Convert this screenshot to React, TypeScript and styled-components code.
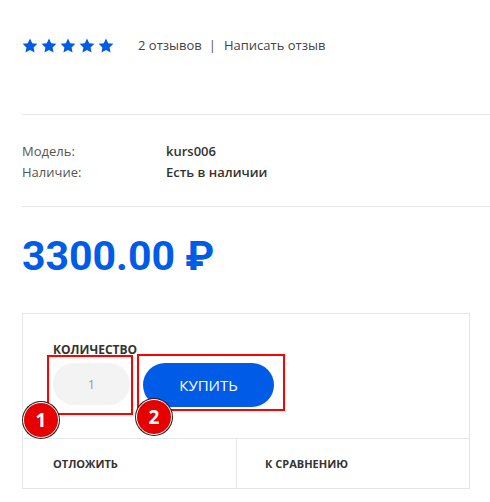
import React from "react";
import styled, { createGlobalStyle } from "styled-components";

const GlobalStyle = createGlobalStyle`
  body {
    margin: 0;
    background: #ffffff;
    font-family: "Open Sans", "Liberation Sans", sans-serif;
    color: #333333;
  }
`;

const BLUE = "#005ce6";

export default function App() {
  return (
    <>
      <GlobalStyle />
      <Page>
        <RatingRow>
          <Stars>
            {[0, 1, 2, 3, 4].map((i) => (
              <Star key={i} />
            ))}
          </Stars>
          <ReviewLink>2 отзывов</ReviewLink>
          <Separator>|</Separator>
          <ReviewLink>Написать отзыв</ReviewLink>
        </RatingRow>
        <Divider />
        <InfoTable>
          <InfoLabel>Модель:</InfoLabel>
          <InfoValue>kurs006</InfoValue>
          <InfoLabel>Наличие:</InfoLabel>
          <InfoValue>Есть в наличии</InfoValue>
        </InfoTable>
        <Divider />
        <Price>3300.00 ₽</Price>
        <BuyBox>
          <BuyTop>
            <FieldLabel>Количество</FieldLabel>
            <Controls>
              <Annotated>
                <QtyInput defaultValue="1" />
                <Marker $top={-8} $right={-3} $bottom={-8} $left={-6} />
                <Badge $top={39} $left={-30}>1</Badge>
              </Annotated>
              <Annotated>
                <BuyButton>Купить</BuyButton>
                <Marker $top={-9} $right={-11} $bottom={-4} $left={-6} />
                <Badge $top={36} $left={-7}>2</Badge>
              </Annotated>
            </Controls>
          </BuyTop>
          <ActionsRow>
            <ActionCell>Отложить</ActionCell>
            <ActionCell>К сравнению</ActionCell>
          </ActionsRow>
        </BuyBox>
      </Page>
    </>
  );
}

function Star() {
  return (
    <svg width="16" height="15" viewBox="0 0 24 23">
      <path
        d="M12 0.8l3.4 7.2 7.9 1-5.8 5.4 1.5 7.8L12 18.4l-7 3.8 1.5-7.8L0.7 9l7.9-1z"
        fill={BLUE}
      />
    </svg>
  );
}

const Page = styled.div`
  width: 490px;
  height: 502px;
  padding-left: 22px;
  box-sizing: border-box;
  overflow: hidden;
`;

const RatingRow = styled.div`
  display: flex;
  align-items: center;
  height: 20px;
  padding-top: 35px;
  margin-bottom: 59px;
  font-size: 13px;
  color: #444444;
`;

const Stars = styled.div`
  display: flex;
  gap: 3px;
  margin-right: 24px;
`;

const ReviewLink = styled.span`
  line-height: 20px;
`;

const Separator = styled.span`
  margin: 0 8px 0 7px;
  color: #555555;
`;

const Divider = styled.div`
  height: 1px;
  background: #e6e6e6;
  margin-right: -22px;
`;

const InfoTable = styled.div`
  display: grid;
  grid-template-columns: 144px 1fr;
  grid-auto-rows: 21px;
  align-items: center;
  padding: 25px 0 24px;
  font-size: 13px;
`;

const InfoLabel = styled.span`
  color: #555555;
`;

const InfoValue = styled.span`
  font-weight: 600;
  color: #333333;
`;

const Price = styled.div`
  font-family: Roboto, "Liberation Sans", sans-serif;
  font-weight: 700;
  font-size: 41px;
  line-height: 48px;
  color: ${BLUE};
  margin-top: 25px;
  margin-bottom: 33px;
`;

const BuyBox = styled.div`
  width: 448px;
  border: 1px solid #e6e6e6;
  box-sizing: border-box;
`;

const BuyTop = styled.div`
  padding: 28px 30px 31px;
`;

const FieldLabel = styled.div`
  font-size: 12px;
  font-weight: 700;
  text-transform: uppercase;
  color: #333333;
  line-height: 15px;
  margin-bottom: 6px;
`;

const Controls = styled.div`
  display: flex;
  gap: 13px;
`;

const Annotated = styled.div`
  position: relative;
  display: flex;
`;

const QtyInput = styled.input`
  width: 77px;
  height: 42px;
  box-sizing: border-box;
  border: none;
  border-radius: 21px;
  background: #f3f3f3;
  text-align: center;
  font-family: "Open Sans", "Liberation Sans", sans-serif;
  font-size: 13px;
  color: #999999;
  outline: none;
`;

const BuyButton = styled.button`
  width: 131px;
  height: 44px;
  border: none;
  border-radius: 22px;
  background: ${BLUE};
  color: #ffffff;
  font-family: "Open Sans", "Liberation Sans", sans-serif;
  font-size: 15px;
  text-transform: uppercase;
  cursor: pointer;
`;

const Marker = styled.div<{ $top: number; $right: number; $bottom: number; $left: number }>`
  position: absolute;
  top: ${({ $top }) => $top}px;
  right: ${({ $right }) => $right}px;
  bottom: ${({ $bottom }) => $bottom}px;
  left: ${({ $left }) => $left}px;
  border: 2px solid #ff0000;
  pointer-events: none;
`;

const Badge = styled.div<{ $top: number; $left: number }>`
  position: absolute;
  top: ${({ $top }) => $top}px;
  left: ${({ $left }) => $left}px;
  width: 34px;
  height: 34px;
  border-radius: 50%;
  background: #e60000;
  border: 1.5px solid #ffffff;
  box-shadow: 0 0 0 1px #222222;
  color: #ffffff;
  font-family: "Open Sans", "Liberation Sans", sans-serif;
  font-weight: 700;
  font-size: 19px;
  display: flex;
  align-items: center;
  justify-content: center;
`;

const ActionsRow = styled.div`
  display: grid;
  grid-template-columns: 213px 1fr;
  border-top: 1px solid #e6e6e6;
`;

const ActionCell = styled.div`
  height: 49px;
  display: flex;
  align-items: center;
  padding-left: 30px;
  font-size: 11px;
  font-weight: 700;
  text-transform: uppercase;
  color: #333333;
  & + & {
    border-left: 1px solid #e6e6e6;
    padding-left: 28px;
  }
`;
